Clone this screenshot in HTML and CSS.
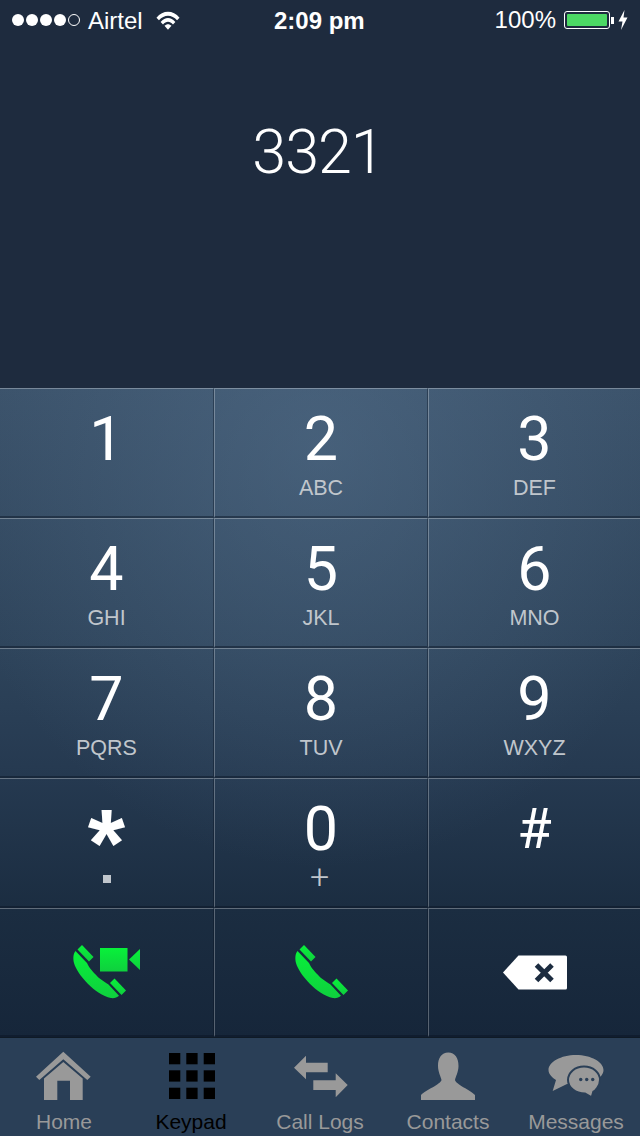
FILE: index.html
```html
<!DOCTYPE html>
<html lang="en">
<head>
    <meta charset="UTF-8">
    <title>Keypad</title>
    <link rel="stylesheet" href="styles.css">
</head>
<body>
    <div class="phone">
        <header class="status-bar">
            <div class="status-left">
                <span class="signal">
                    <i class="dot"></i><i class="dot"></i><i class="dot"></i><i class="dot"></i><i class="dot empty"></i>
                </span>
                <span class="carrier">Airtel</span>
                <svg class="wifi" viewBox="0 0 26 20">
                    <path d="M0.5 7C7.5 -1.5 18.5 -1.5 25.5 7L22.8 9.8C17 3.2 9 3.2 3.2 9.8Z" fill="#fff"/>
                    <path d="M5 11.5C10 6 16 6 21 11.5L18.4 14.2C15 10.5 11 10.5 7.6 14.2Z" fill="#fff"/>
                    <path d="M9.2 15.8C11.5 13.4 14.5 13.4 16.8 15.8L13 20Z" fill="#fff"/>
                </svg>
            </div>
            <div class="status-time">2:09 pm</div>
            <div class="status-right">
                <span class="percent">100%</span>
                <span class="battery"><span class="battery-fill"></span></span>
                <span class="battery-tip"></span>
                <svg class="bolt" viewBox="0 0 10 20">
                    <path d="M6.5 0L0.5 11.5H4.5L3 20L9.5 7.5H5.5Z" fill="#fff"/>
                </svg>
            </div>
        </header>

        <section class="display">3321</section>

        <section class="keypad">
            <div class="key"><span class="digit">1</span></div>
            <div class="key"><span class="digit">2</span><span class="letters">ABC</span></div>
            <div class="key"><span class="digit">3</span><span class="letters">DEF</span></div>
            <div class="key"><span class="digit">4</span><span class="letters">GHI</span></div>
            <div class="key"><span class="digit">5</span><span class="letters">JKL</span></div>
            <div class="key"><span class="digit">6</span><span class="letters">MNO</span></div>
            <div class="key"><span class="digit">7</span><span class="letters">PQRS</span></div>
            <div class="key"><span class="digit">8</span><span class="letters">TUV</span></div>
            <div class="key"><span class="digit">9</span><span class="letters">WXYZ</span></div>
            <div class="key">
                <span class="digit star">*</span>
                <span class="letters"><i class="square"></i></span>
            </div>
            <div class="key"><span class="digit">0</span><span class="letters plus">+</span></div>
            <div class="key"><span class="digit hash">#</span></div>
            <div class="key action">
                <svg class="video-call" viewBox="13 15 70 56">
                    <defs>
                        <linearGradient id="green" x1="0" y1="0" x2="0" y2="1">
                            <stop offset="0" stop-color="#08f13a"/>
                            <stop offset="1" stop-color="#0fcf3e"/>
                        </linearGradient>
                    </defs>
                    <path d="M18.5 20.5L23 16L34.5 28L30 32.5Z" fill="url(#green)"/>
                    <path d="M51 54L55.5 49.5L67 61.5L62.5 66Z" fill="url(#green)"/>
                    <path d="M16.5 22C14 25 14 30 15 34C18 45 36 66 52 69C55 69.5 58 68.5 60 66.7L49.5 55.5C47 54 44 52 40 49C36 45 31 40 29 36L28 34Z" fill="url(#green)"/>
                    <rect x="41" y="19" width="27.5" height="23.5" fill="url(#green)"/>
                    <path d="M70 30.5L81 20V41Z" fill="url(#green)"/>
                </svg>
            </div>
            <div class="key action">
                <svg class="call" viewBox="13 15 54 56">
                    <path d="M18.5 20.5L23 16L34.5 28L30 32.5Z" fill="url(#green)"/>
                    <path d="M51 54L55.5 49.5L67 61.5L62.5 66Z" fill="url(#green)"/>
                    <path d="M16.5 22C14 25 14 30 15 34C18 45 36 66 52 69C55 69.5 58 68.5 60 66.7L49.5 55.5C47 54 44 52 40 49C36 45 31 40 29 36L28 34Z" fill="url(#green)"/>
                </svg>
            </div>
            <div class="key action">
                <svg class="backspace" viewBox="0 0 66 37">
                    <path d="M1 18.5L16.5 1.5H63.5Q65 1.5 65 3V34Q65 35.5 63.5 35.5H16.5Z" fill="#fff"/>
                    <path d="M34.5 11L50 26.5M50 11L34.5 26.5" stroke="#1c2c40" stroke-width="5"/>
                </svg>
            </div>
        </section>

        <nav class="tab-bar">
            <div class="tab">
                <svg viewBox="34 20 60 52">
                    <path d="M63.3 21.7L90.7 46.7L87.3 50L63.3 29.3L39.3 50L36 46.7Z" fill="#999"/>
                    <path d="M63.3 32L82.7 48.5V70H70V50.7H57.3V70H44V48.5Z" fill="#999"/>
                </svg>
                <span>Home</span>
            </div>
            <div class="tab active">
                <svg viewBox="162 20 60 52">
                    <rect x="169" y="23" width="11.3" height="11.3"/>
                    <rect x="186.3" y="23" width="11.3" height="11.3"/>
                    <rect x="203.7" y="23" width="11.3" height="11.3"/>
                    <rect x="169" y="40.3" width="11.3" height="11.3"/>
                    <rect x="186.3" y="40.3" width="11.3" height="11.3"/>
                    <rect x="203.7" y="40.3" width="11.3" height="11.3"/>
                    <rect x="169" y="57.7" width="11.3" height="11.3"/>
                    <rect x="186.3" y="57.7" width="11.3" height="11.3"/>
                    <rect x="203.7" y="57.7" width="11.3" height="11.3"/>
                </svg>
                <span>Keypad</span>
            </div>
            <div class="tab">
                <svg viewBox="290 20 60 52">
                    <path d="M294 37.7L306 25.7V32.7H327.7V42.3H306V49.3Z" fill="#999"/>
                    <path d="M347.7 55L335.7 43.3V50.3H313.3V60H335.7V67.3Z" fill="#999"/>
                </svg>
                <span>Call Logs</span>
            </div>
            <div class="tab">
                <svg viewBox="98 20 60 52">
                    <path d="M128.3 22.5C135 22.5 138.5 28 138.5 36C138.5 42 135.5 47 135 50C135.5 54 150 60 155 65V70H101V65C106 60 121 54 121.5 50C121 47 118 42 118 36C118 28 121.5 22.5 128.3 22.5Z" fill="#999"/>
                </svg>
                <span>Contacts</span>
            </div>
            <div class="tab">
                <svg viewBox="226 20 60 52">
                    <path d="M256 25C271 25 283.5 32 283.5 40C283.5 48 271 55 256 55C252 55 250 54.5 247 54L232.7 61L236 50C232 47.5 228.5 44 228.5 40C228.5 32 241 25 256 25Z" fill="#999"/>
                    <path d="M264 36.5C273 36.5 280 42.5 280 50C280 56 275 61 273.3 61.7L271.7 67.3L265 63.5C255.5 63.5 248 57.5 248 50C248 42.5 255 36.5 264 36.5Z" fill="#999" stroke="#2a3f57" stroke-width="2"/>
                    <circle cx="260.7" cy="49.5" r="1.7" fill="#2a3f57"/>
                    <circle cx="266.7" cy="49.5" r="1.7" fill="#2a3f57"/>
                    <circle cx="272.7" cy="49.5" r="1.7" fill="#2a3f57"/>
                </svg>
                <span>Messages</span>
            </div>
        </nav>
    </div>
</body>
</html>
```

FILE: styles.css
```css
* {
    box-sizing: border-box;
}
body {
    margin: 0;
    background-color: #1e2b3e;
    font-family: "Liberation Sans", Arial, sans-serif;
}
.phone {
    width: 640px;
    height: 1136px;
    display: flex;
    flex-direction: column;
    overflow: hidden;
    background-color: #1e2b3e;
}

/* status bar */
.status-bar {
    height: 40px;
    display: flex;
    align-items: center;
    justify-content: space-between;
    position: relative;
    padding: 0 12px 0 12px;
    color: #fff;
}
.status-left,
.status-right {
    display: flex;
    align-items: center;
}
.signal {
    display: flex;
    gap: 2px;
}
.dot {
    width: 12px;
    height: 12px;
    border-radius: 50%;
    background-color: #fff;
}
.dot.empty {
    background-color: transparent;
    border: 1px solid #fff;
}
.carrier {
    font-size: 24px;
    margin-left: 8px;
    padding-top: 2px;
}
.wifi {
    width: 24px;
    height: 19px;
    margin-left: 13px;
}
.status-time {
    position: absolute;
    left: 274px;
    font-size: 24px;
    font-weight: bold;
    padding-top: 2px;
}
.percent {
    font-size: 24px;
}
.battery {
    width: 46px;
    height: 18px;
    margin-left: 8px;
    padding: 2px;
    border: 1px solid #fff;
    border-radius: 3px;
}
.battery-fill {
    display: block;
    height: 100%;
    background-color: #4cd964;
    border-radius: 1px;
}
.battery-tip {
    width: 3px;
    height: 7px;
    margin-left: 1px;
    background-color: #fff;
}
.bolt {
    width: 10px;
    height: 20px;
    margin-left: 4px;
}

/* number display */
.display {
    height: 348px;
    padding-top: 72px;
    padding-right: 4px;
    text-align: center;
    color: #fff;
    font-family: Roboto, sans-serif;
    font-weight: 300;
    font-size: 61px;
    line-height: 80px;
    letter-spacing: -1px;
}

/* keypad */
.keypad {
    height: 649px;
    display: grid;
    grid-template-columns: 214px 214px 212px;
    grid-template-rows: repeat(4, 130px) 129px;
    background:
        radial-gradient(ellipse 380px 420px at 320px 60px, rgba(95, 125, 155, 0.38), transparent),
        linear-gradient(#3a5169 0, #2e445b 260px, #253950 390px, #1b2d41 520px, #16263a 649px);
}
.key {
    display: flex;
    flex-direction: column;
    align-items: center;
    color: #fff;
    border-top: 1px solid rgba(255, 255, 255, 0.3);
    border-bottom: 2px solid rgba(10, 20, 35, 0.45);
    border-left: 1px solid rgba(255, 255, 255, 0.28);
    border-right: 1px solid rgba(10, 20, 35, 0.4);
    padding-top: 16px;
}
.key:nth-child(3n) {
    border-right: none;
}
.key:nth-child(3n+1) {
    border-left: none;
}
.digit {
    font-family: Roboto, sans-serif;
    font-size: 61px;
    line-height: 68px;
}
.star {
    font-family: "Liberation Sans", sans-serif;
    font-size: 96px;
    font-weight: bold;
    line-height: 96px;
    height: 68px;
}
.hash {
    font-size: 56px;
}
.letters {
    font-size: 21.5px;
    line-height: 26px;
    margin-top: 1.5px;
    color: #c0c6cc;
}
.plus {
    font-family: Roboto, sans-serif;
    font-weight: 300;
    font-size: 34px;
    margin-top: 0;
    margin-right: 3px;
}
.square {
    display: block;
    width: 8px;
    height: 8px;
    margin-top: 10px;
    background-color: #c0c6cc;
}
.key.action {
    padding-top: 0;
    justify-content: center;
}
.video-call {
    width: 70px;
    height: 56px;
}
.call {
    width: 54px;
    height: 56px;
}
.backspace {
    width: 66px;
    height: 37px;
}

/* tab bar */
.tab-bar {
    flex: 1;
    display: grid;
    grid-template-columns: repeat(5, 128px);
    background-color: #2a3f57;
    border-top: 1px solid #0f1a26;
}
.tab {
    display: flex;
    flex-direction: column;
    align-items: center;
    padding-top: 12px;
    color: #999;
    font-size: 21px;
}
.tab svg {
    width: 60px;
    height: 52px;
}
.tab span {
    margin-top: 8px;
    line-height: 24px;
}
.tab.active {
    color: #000;
}
.tab.active span {
    margin-right: 2px;
}
```
